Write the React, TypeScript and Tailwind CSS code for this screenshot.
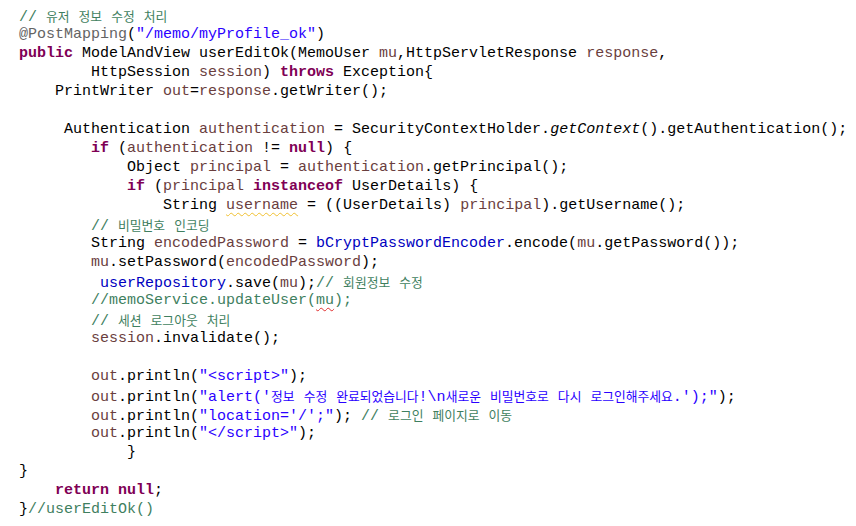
import React from 'react';

// eclipse-like java highlighting
const hangul = /([\uAC00-\uD7A3]+)/;

function ko(s: string) {
  return s.split(hangul).map((p, i) =>
    hangul.test(p) ? (
      <span key={i} className="font-['Noto_Sans_CJK_KR','Noto_Sans_CJK_SC',sans-serif] text-[12.8px]">
        {p}
      </span>
    ) : (
      p
    )
  );
}

const K = ({ t }: { t: string }) => <span className="font-bold text-[#7f0055]">{t}</span>;
const S = ({ t }: { t: string }) => <span className="text-[#2a00ff]">{ko(t)}</span>;
const C = ({ t }: { t: string }) => <span className="text-[#3f7f5f]">{ko(t)}</span>;
const V = ({ t }: { t: string }) => <span className="text-[#6a3e3e]">{t}</span>;
const F = ({ t }: { t: string }) => <span className="text-[#0000c0]">{t}</span>;
const A = ({ t }: { t: string }) => <span className="text-[#646464]">{t}</span>;
const I = ({ t }: { t: string }) => <span className="italic">{t}</span>;

const lines: React.ReactNode[] = [
  <C t="// 유저 정보 수정 처리" />,
  <><A t="@PostMapping" />(<S t={'"/memo/myProfile_ok"'} />)</>,
  <><K t="public" /> ModelAndView userEditOk(MemoUser <V t="mu" />,HttpServletResponse <V t="response" />,</>,
  <>{'        '}HttpSession <V t="session" />) <K t="throws" /> Exception{'{'}</>,
  <>{'    '}PrintWriter <V t="out" />=<V t="response" />.getWriter();</>,
  '',
  <>{'     '}Authentication <V t="authentication" /> = SecurityContextHolder.<I t="getContext" />().getAuthentication();</>,
  <>{'        '}<K t="if" /> (<V t="authentication" /> != <K t="null" />) {'{'}</>,
  <>{'            '}Object <V t="principal" /> = <V t="authentication" />.getPrincipal();</>,
  <>{'            '}<K t="if" /> (<V t="principal" /> <K t="instanceof" /> UserDetails) {'{'}</>,
  <>
    {'                '}String{' '}
    <span className="text-[#6a3e3e] underline decoration-wavy decoration-[#f0c030] decoration-1 underline-offset-[3px]">username</span>
    {' '}= ((UserDetails) <V t="principal" />).getUsername();
  </>,
  <>{'        '}<C t="// 비밀번호 인코딩" /></>,
  <>{'        '}String <V t="encodedPassword" /> = <F t="bCryptPasswordEncoder" />.encode(<V t="mu" />.getPassword());</>,
  <>{'        '}<V t="mu" />.setPassword(<V t="encodedPassword" />);</>,
  <>{'         '}<F t="userRepository" />.save(<V t="mu" />);<C t="// 회원정보 수정" /></>,
  <>
    {'        '}<C t="//memoService.updateUser(" />
    <span className="text-[#3f7f5f] underline decoration-wavy decoration-[#e03030] decoration-1 underline-offset-[3px]">mu</span>
    <C t=");" />
  </>,
  <>{'        '}<C t="// 세션 로그아웃 처리" /></>,
  <>{'        '}<V t="session" />.invalidate();</>,
  '',
  <>{'        '}<V t="out" />.println(<S t={'"<script>"'} />);</>,
  <>{'        '}<V t="out" />.println(<S t={'"alert(\'정보 수정 완료되었습니다!\\n새로운 비밀번호로 다시 로그인해주세요.\');"'} />);</>,
  <>{'        '}<V t="out" />.println(<S t={'"location=\'/\';"'} />); <C t="// 로그인 페이지로 이동" /></>,
  <>{'        '}<V t="out" />.println(<S t={'"</script>"'} />);</>,
  <>{'            }'}</>,
  <>{'}'}</>,
  <>{'    '}<K t="return" /> <K t="null" />;</>,
  <>{'}'}<C t="//userEditOk()" /></>,
];

export default function App() {
  return (
    <div className="w-[856px] h-[526px] overflow-hidden bg-white pt-[6px] pl-[19px] font-['Liberation_Mono',monospace] text-[15px] text-black">
      {lines.map((l, i) => (
        <div key={i} className="h-[19px] leading-[19px] whitespace-pre">
          {l}
        </div>
      ))}
    </div>
  );
}
